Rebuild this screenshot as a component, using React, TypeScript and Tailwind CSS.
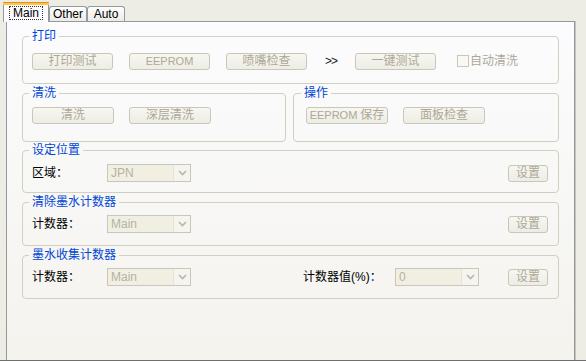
import type { ReactNode } from 'react'

const font = { fontFamily: '"Liberation Sans", "Noto Sans CJK SC", sans-serif' }

function Btn({ children, w = 'w-[81px]' }: { children: ReactNode; w?: string }) {
  return (
    <div
      className={`${w} h-[17px] shrink-0 rounded-[3px] border border-[#c9c7ba] bg-gradient-to-b from-[#f7f6ef] to-[#eeede5] text-[#aca899] text-[12px] leading-[15px] flex items-center justify-center whitespace-nowrap`}
    >
      {children}
    </div>
  )
}

function Combo({ value }: { value: string }) {
  return (
    <div className="w-[84px] h-[18px] shrink-0 border border-[#c9c7ba] bg-[#f1efe2] flex items-stretch">
      <div className="flex-1 pl-[3px] text-[12px] leading-[16px] text-[#b5b2a4]">{value}</div>
      <div className="w-[17px] border-l border-[#e6e4da] bg-[#f5f4ee] flex items-center justify-center">
        <svg width="9" height="6" viewBox="0 0 9 6">
          <path d="M1 1 L4.5 4.5 L8 1" fill="none" stroke="#b8b6aa" strokeWidth="1.6" />
        </svg>
      </div>
    </div>
  )
}

function Group({
  title,
  className,
  legend = 'ml-[-3px]',
  children,
}: {
  title: string
  className: string
  legend?: string
  children: ReactNode
}) {
  return (
    <fieldset className={`${className} border border-[#d0d0bf] rounded-[4px] min-w-0`}>
      <legend className={`${legend} px-[3px] text-[12px] leading-[16px] text-[#0046d5]`}>{title}</legend>
      {children}
    </fieldset>
  )
}

function Tab({ label, active }: { label: string; active?: boolean }) {
  if (active) {
    return (
      <div className="relative z-10 w-[46px] h-[20px] -mb-px rounded-t-[3px] border-x border-[#919b9c] bg-[#fcfcfe] flex flex-col">
        <div className="h-[1px] bg-[#e68b2c] rounded-t-[3px] -mx-px" />
        <div className="h-[2px] bg-[#ffc83c] -mx-px" />
        <div className="mx-[5px] mt-[1px] h-[14px] border border-dotted border-[#333] flex items-center justify-center text-[12px] text-black">
          {label}
        </div>
      </div>
    )
  }
  return (
    <div className="w-[38px] h-[15px] rounded-t-[3px] border border-b-0 border-[#919b9c] bg-gradient-to-b from-[#fefefe] to-[#ecebe6] flex items-center justify-center text-[12px] text-black">
      {label}
    </div>
  )
}

export default function App() {
  return (
    <div className="w-[586px] h-[361px] bg-[#eeede5] border-b border-[#6f6f6f] overflow-hidden" style={font}>
      <div className="flex items-end h-[21px] pl-[3px] pt-[2px]">
        <Tab label="Main" active />
        <Tab label="Other" />
        <Tab label="Auto" />
      </div>

      <div className="ml-[6px] w-[569px] h-[339px] border-x border-t border-[#919b9c] shadow-[1px_0_0_#c5c4bb] bg-gradient-to-b from-[#fcfcfe] to-[#f4f3ee] pl-[15px] pt-[6px]">
        <Group title="打印" className="w-[537px] h-[56px] pl-[9px] pt-[8px]">
          <div className="flex items-center">
            <Btn>打印测试</Btn>
            <div className="w-[16px]" />
            <Btn>
              <span className="text-[11px]">EEPROM</span>
            </Btn>
            <div className="w-[16px]" />
            <Btn>喷嘴检查</Btn>
            <div className="w-[48px] text-center text-[12px] text-[#222] tracking-[-1px]">&gt;&gt;</div>
            <Btn>一键测试</Btn>
            <div className="ml-[21px] w-[12px] h-[12px] border border-[#c9c7ba] bg-[#f8f8f4]" />
            <span className="ml-[1px] text-[12px] text-[#aca899]">自动清洗</span>
          </div>
        </Group>

        <div className="flex gap-[7px] mt-[1px]">
          <Group title="清洗" className="w-[264px] h-[57px] pl-[9px] pt-[6px]">
            <div className="flex gap-[15px]">
              <Btn w="w-[82px]">清洗</Btn>
              <Btn w="w-[82px]">深层清洗</Btn>
            </div>
          </Group>
          <Group title="操作" legend="ml-[-5px]" className="w-[266px] h-[57px] pl-[12px] pt-[6px]">
            <div className="flex gap-[15px]">
              <Btn w="w-[82px]">
                <span className="text-[11px]">EEPROM</span>
                <span className="ml-[3px]">保存</span>
              </Btn>
              <Btn w="w-[82px]">面板检查</Btn>
            </div>
          </Group>
        </div>

        <Group title="设定位置" className="w-[537px] h-[51px] pl-[9px] pr-[10px] pt-[5px]">
          <div className="flex items-center">
            <span className="w-[75px] text-[12px] text-black">区域：</span>
            <Combo value="JPN" />
            <div className="ml-auto mt-[2px]">
              <Btn w="w-[40px]">设置</Btn>
            </div>
          </div>
        </Group>

        <Group title="清除墨水计数器" className="w-[537px] h-[52px] mt-[1px] pl-[9px] pr-[10px] pt-[4px]">
          <div className="flex items-center">
            <span className="w-[75px] text-[12px] text-black">计数器：</span>
            <Combo value="Main" />
            <div className="ml-auto mt-[2px]">
              <Btn w="w-[40px]">设置</Btn>
            </div>
          </div>
        </Group>

        <Group title="墨水收集计数器" className="w-[537px] h-[52px] mt-[1px] pl-[9px] pr-[10px] pt-[5px]">
          <div className="flex items-center">
            <span className="w-[75px] text-[12px] text-black">计数器：</span>
            <Combo value="Main" />
            <span className="ml-[112px] w-[92px] text-[12px] text-black">计数器值(%)：</span>
            <Combo value="0" />
            <div className="ml-auto">
              <Btn w="w-[40px]">设置</Btn>
            </div>
          </div>
        </Group>
      </div>
    </div>
  )
}
